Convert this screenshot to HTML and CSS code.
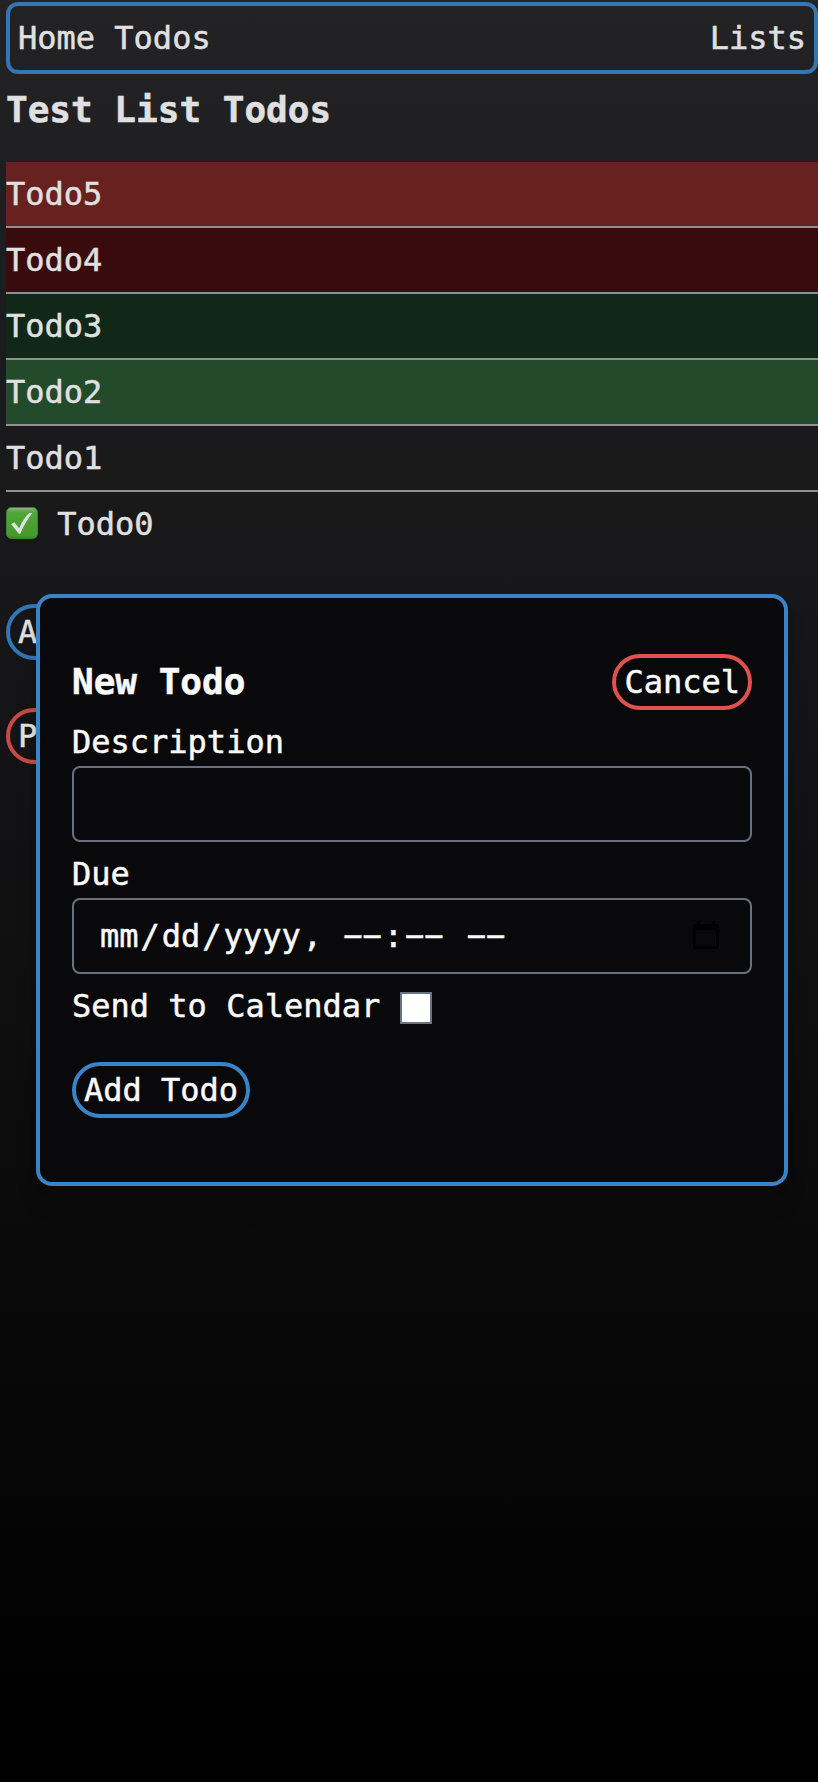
FILE: index.html
```html
<!DOCTYPE html>
<html lang="en">
<head>
<meta charset="utf-8">
<title>Test List Todos</title>
<link rel="stylesheet" href="styles.css">
</head>
<body>
<div class="page">
  <nav class="nav">
    <div class="nav-group"><a>Home</a><a>Todos</a></div>
    <a>Lists</a>
  </nav>
  <h1 class="title">Test List Todos</h1>
  <ul class="todos">
    <li class="todo overdue">Todo5</li>
    <li class="todo overdue-dark">Todo4</li>
    <li class="todo upcoming-dark">Todo3</li>
    <li class="todo upcoming">Todo2</li>
    <li class="todo">Todo1</li>
    <li class="todo done">
      <svg class="check" viewBox="0 0 32 32">
        <defs>
          <linearGradient id="green" x1="0" y1="0" x2="0" y2="1">
            <stop offset="0" stop-color="#94d682"/>
            <stop offset=".16" stop-color="#5aba40"/>
            <stop offset=".9" stop-color="#4dab2e"/>
            <stop offset="1" stop-color="#43922d"/>
          </linearGradient>
        </defs>
        <rect x=".5" y=".5" width="31" height="31" rx="5" fill="url(#green)" stroke="#43943a"/>
        <path d="M5.200 17.200 8.300 15.200 13.200 21.200Q17 12 23.200 6H26.400Q19.500 14.500 14.200 26.800H12.800Z" fill="#fafafa"/>
      </svg>
      <span>Todo0</span>
    </li>
  </ul>
  <div class="actions">
    <button class="btn wide">A</button>
    <button class="btn danger wide">P</button>
  </div>
</div>
<div class="backdrop"></div>
<form class="modal">
  <div class="modal-head">
    <h2 class="modal-title">New Todo</h2>
    <button class="btn danger" type="button">Cancel</button>
  </div>
  <label class="label" for="description">Description</label>
  <input class="field" id="description" type="text">
  <div class="label">Due</div>
  <div class="field date">
    <div class="date-text"><span class="part">mm</span>/<span class="part">dd</span>/<span class="part">yyyy</span>, <span class="part">−−</span>:<span class="part">−−</span> <span class="part">−−</span></div>
    <svg class="calendar" viewBox="0 0 26 28">
      <path fill-rule="evenodd" d="M4 0H7V3H19V0H22V3H23Q26 3 26 6V25Q26 28 23 28H3Q0 28 0 25V6Q0 3 3 3H4ZM3 9V25H23V9Z"/>
    </svg>
  </div>
  <div class="send"><span>Send to Calendar</span><input class="checkbox" type="checkbox"></div>
  <button class="btn submit" type="button">Add Todo</button>
</form>
</body>
</html>
```
FILE: styles.css
```css
* {
  box-sizing: border-box;
  margin: 0;
  padding: 0;
}

body {
  height: 1782px;
  overflow: hidden;
  position: relative;
  background: linear-gradient(#27272a, #000);
  color: #fafafa;
  font: 32px/48px "DejaVu Sans Mono", monospace;
  -webkit-text-stroke: 0.5px currentColor;
}

.page {
  padding: 2px 0 0 6px;
}

.nav {
  display: flex;
  justify-content: space-between;
  padding: 8px;
  border: 4px solid #3884c7;
  border-radius: 12px;
}

.nav-group {
  display: flex;
  gap: 19.27px;
}

.title,
.modal-title {
  font-size: 36px;
  line-height: 56px;
  font-weight: bold;
}

.title {
  margin: 8px 0 24px;
}

.todos {
  list-style: none;
}

.todo {
  padding: 8px 0;
  border-bottom: 2px solid #a1a1a5;
}

.todo:last-child {
  border-bottom: 0;
}

.overdue {
  background: #732522;
}

.overdue-dark {
  background: #400d0e;
}

.upcoming-dark {
  background: #132c1b;
}

.upcoming {
  background: #285330;
}

.done {
  display: flex;
  align-items: center;
  gap: 19.27px;
}

.check {
  width: 32px;
  height: 32px;
  margin-bottom: 2px;
}

.actions {
  display: flex;
  flex-direction: column;
  align-items: flex-start;
  gap: 48px;
  padding-top: 48px;
}

.btn {
  height: 56px;
  padding: 0 8px;
  border: 4px solid #3884c7;
  border-radius: 28px;
  background: transparent;
  color: inherit;
  font: inherit;
  -webkit-text-stroke: inherit;
}

.wide {
  width: 160px;
  text-align: left;
}

.danger {
  border-color: #df524d;
}

.backdrop {
  position: absolute;
  inset: 0;
  background: rgba(0, 0, 0, 0.1);
}

.modal {
  position: absolute;
  top: 594px;
  left: 36px;
  width: 752px;
  height: 592px;
  padding: 56px 32px;
  border: 4px solid #3884c7;
  border-radius: 16px;
  background: #09090b;
  box-shadow: 0 20px 30px -6px rgba(0, 0, 0, 0.1), 0 8px 12px -4px rgba(0, 0, 0, 0.1);
}

.modal-head {
  display: flex;
  justify-content: space-between;
}

.label {
  display: block;
  margin-top: 8px;
}

.field {
  display: flex;
  align-items: center;
  justify-content: space-between;
  width: 100%;
  height: 76px;
  padding: 0 31px 0 24px;
  border: 2px solid #6b7080;
  border-radius: 8px;
  background: transparent;
  color: inherit;
  font: inherit;
}

.date-text {
  white-space: pre;
}

.part {
  padding: 0 2px;
}

.calendar {
  width: 26px;
  height: 28px;
  margin-bottom: 2px;
}

.send {
  display: flex;
  align-items: center;
  gap: 19.27px;
  margin: 8px 0 32px;
}

.checkbox {
  appearance: none;
  width: 32px;
  height: 32px;
  margin-top: 4px;
  border: 2px solid #6b7280;
  background: #fff;
}
```
